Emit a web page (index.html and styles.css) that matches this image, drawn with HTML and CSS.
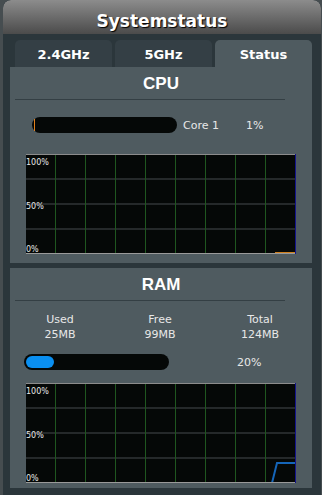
FILE: index.html
```html
<!DOCTYPE html>
<html lang="de">
<head>
    <meta charset="UTF-8">
    <meta name="viewport" content="width=device-width, initial-scale=1.0">
    <title>Systemstatus</title>
    <link rel="stylesheet" href="styles.css">
</head>
<body>

<div class="widget">
    <header class="head">Systemstatus</header>

    <nav class="tabs">
        <div class="tab">2.4GHz</div>
        <div class="tab">5GHz</div>
        <div class="tab active">Status</div>
    </nav>

    <section class="panel cpu">
        <h2>CPU</h2>
        <hr>
        <div class="bar-row">
            <div class="bar"><div class="fill orange" style="width: 1%"></div></div>
            <span class="core">Core 1</span>
            <span class="pct">1%</span>
        </div>
        <svg class="chart" width="270" height="100" viewBox="0 0 270 100">
            <rect width="270" height="100" fill="#050807"/>
            <g stroke="#25292a" stroke-width="2">
                <line x1="0" y1="25" x2="270" y2="25"/>
                <line x1="0" y1="50" x2="270" y2="50"/>
                <line x1="0" y1="75" x2="270" y2="75"/>
            </g>
            <g stroke="#1f561f" stroke-width="1">
                <line x1="29.5" y1="0" x2="29.5" y2="100"/>
                <line x1="59.5" y1="0" x2="59.5" y2="100"/>
                <line x1="89.5" y1="0" x2="89.5" y2="100"/>
                <line x1="119.5" y1="0" x2="119.5" y2="100"/>
                <line x1="149.5" y1="0" x2="149.5" y2="100"/>
                <line x1="179.5" y1="0" x2="179.5" y2="100"/>
                <line x1="209.5" y1="0" x2="209.5" y2="100"/>
                <line x1="239.5" y1="0" x2="239.5" y2="100"/>
            </g>
            <line x1="249" y1="98.5" x2="269" y2="98.5" stroke="#d0801e" stroke-width="1"/>
            <line x1="0" y1="0.5" x2="270" y2="0.5" stroke="#8c8c8c"/>
            <line x1="0" y1="99.5" x2="270" y2="99.5" stroke="#9a9a9a"/>
            <line x1="269.5" y1="0" x2="269.5" y2="100" stroke="#14148c"/>
            <g class="axis">
                <text x="0" y="11">100%</text>
                <text x="0" y="55">50%</text>
                <text x="0" y="98">0%</text>
            </g>
        </svg>
    </section>

    <section class="panel ram">
        <h2>RAM</h2>
        <hr>
        <div class="stats">
            <div>Used<br>25MB</div>
            <div>Free<br>99MB</div>
            <div>Total<br>124MB</div>
        </div>
        <div class="bar-row">
            <div class="bar"><div class="fill blue" style="width: 20%"></div></div>
            <span class="pct">20%</span>
        </div>
        <svg class="chart" width="270" height="100" viewBox="0 0 270 100">
            <rect width="270" height="100" fill="#050807"/>
            <g stroke="#25292a" stroke-width="2">
                <line x1="0" y1="25" x2="270" y2="25"/>
                <line x1="0" y1="50" x2="270" y2="50"/>
                <line x1="0" y1="75" x2="270" y2="75"/>
            </g>
            <g stroke="#1f561f" stroke-width="1">
                <line x1="29.5" y1="0" x2="29.5" y2="100"/>
                <line x1="59.5" y1="0" x2="59.5" y2="100"/>
                <line x1="89.5" y1="0" x2="89.5" y2="100"/>
                <line x1="119.5" y1="0" x2="119.5" y2="100"/>
                <line x1="149.5" y1="0" x2="149.5" y2="100"/>
                <line x1="179.5" y1="0" x2="179.5" y2="100"/>
                <line x1="209.5" y1="0" x2="209.5" y2="100"/>
                <line x1="239.5" y1="0" x2="239.5" y2="100"/>
            </g>
            <polyline points="246,100 251,80 270,80" fill="none" stroke="#1565b8" stroke-width="2"/>
            <line x1="0" y1="0.5" x2="270" y2="0.5" stroke="#8c8c8c"/>
            <line x1="0" y1="99.5" x2="270" y2="99.5" stroke="#9a9a9a"/>
            <line x1="269.5" y1="0" x2="269.5" y2="100" stroke="#14148c"/>
            <g class="axis">
                <text x="0" y="11">100%</text>
                <text x="0" y="55">50%</text>
                <text x="0" y="98">0%</text>
            </g>
        </svg>
    </section>
</div>

</body>
</html>
```

FILE: styles.css
```css
body {
    margin: 0;
    background-color: #464d50;
    font-family: "DejaVu Sans", Verdana, sans-serif;
    color: #e8e8e8;
}

.widget {
    margin-left: 3px;
    width: 318px;
    height: 495px;
    background-color: #2b363b;
    border-radius: 8px 8px 0 0;
    overflow: hidden;
}

.head {
    height: 34px;
    box-sizing: border-box;
    padding-top: 10px;
    line-height: 22px;
    text-align: center;
    font-size: 17px;
    font-weight: bold;
    color: #fff;
    text-shadow: 1px 1px 1px #000;
    background: linear-gradient(#8c8c8c, #4b4b4b);
    border-radius: 8px 8px 0 0;
}

.tabs {
    display: flex;
    gap: 3px;
    padding: 6px 0 0 12px;
}
.tab {
    width: 97px;
    height: 27px;
    box-sizing: border-box;
    padding-top: 2px;
    line-height: 25px;
    text-align: center;
    font-size: 13px;
    font-weight: bold;
    color: #fff;
    background-color: #343f45;
    border-radius: 5px 5px 0 0;
}
.tab.active {
    background-color: #4f5b60;
}

.panel {
    margin-left: 7px;
    width: 302px;
    box-sizing: border-box;
    background-color: #4f5b60;
}
.panel.cpu {
    height: 196px;
}
.panel.ram {
    height: 220px;
    margin-top: 5px;
}

.panel h2 {
    margin: 0;
    padding-top: 7px;
    line-height: 20px;
    text-align: center;
    font-family: "Liberation Sans", Arial, sans-serif;
    font-size: 17px;
    font-weight: bold;
    color: #fff;
}
.panel hr {
    margin: 5px 0 0 5px;
    width: 270px;
    height: 1px;
    border: none;
    background-color: #343f44;
}

.bar-row {
    display: flex;
    align-items: center;
    font-size: 11px;
    line-height: 15px;
}
.bar {
    width: 145px;
    height: 16px;
    box-sizing: border-box;
    padding: 2px;
    background-color: #050807;
    border-radius: 8px;
}
.fill {
    height: 12px;
    border-radius: 6px;
}
.fill.orange {
    background-color: #e0801c;
    border-radius: 0;
}
.fill.blue {
    background-color: #0a8ff0;
}

.cpu .bar-row {
    margin: 17px 0 0 22px;
    padding-top: 1px;
}
.cpu .bar {
    margin-top: -1px;
}
.cpu .core {
    margin-left: 6px;
}
.cpu .pct {
    margin-left: 27px;
}

.ram .stats {
    display: grid;
    grid-template-columns: 100px 100px 100px;
    margin-top: 11px;
    text-align: center;
    font-size: 11px;
    line-height: 15px;
}
.ram .bar-row {
    margin: 12px 0 0 14px;
}
.ram .pct {
    margin-left: 68px;
}

.chart {
    display: block;
    margin-left: 16px;
}
.cpu .chart {
    margin-top: 21px;
}
.ram .chart {
    margin-top: 13px;
}
.axis text {
    font-family: "DejaVu Sans", Verdana, sans-serif;
    font-size: 8px;
    fill: #e8e8e8;
}
```
